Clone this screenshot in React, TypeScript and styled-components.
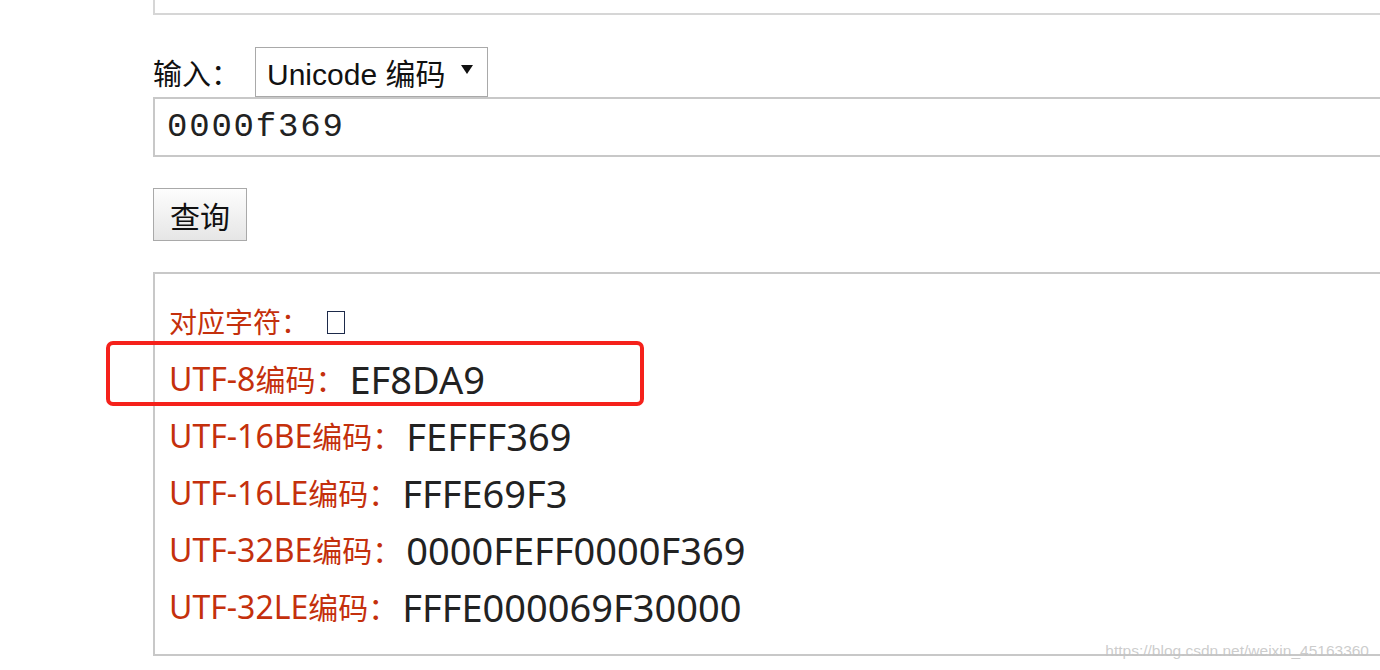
import React from "react";
import styled, { createGlobalStyle } from "styled-components";

const Global = createGlobalStyle`
  html, body { margin: 0; padding: 0; background: #fff; overflow: hidden; }
  body { width: 1380px; height: 670px; position: relative; font-family: "Noto Sans CJK SC", sans-serif; }
`;

const Page = styled.div`
  position: relative;
  width: 1380px;
  height: 670px;
  overflow: hidden;
`;

const Column = styled.div`
  margin-left: 153px;
  width: 1300px;
  display: flex;
  flex-direction: column;
`;

const TopBox = styled.div`
  height: 13px;
  border: 2px solid #d6d6d6;
  border-top: none;
`;

const InputRow = styled.div`
  margin-top: 31px;
  display: flex;
  align-items: flex-end;
  height: 51px;
`;

const Label = styled.span`
  font-family: "Liberation Sans", "Noto Sans CJK SC", sans-serif;
  font-size: 29px;
  color: #111;
  line-height: 1;
  padding-bottom: 7px;
  width: 102px;
`;

const Select = styled.div`
  box-sizing: border-box;
  width: 233px;
  height: 50px;
  border: 1px solid #a9a9a9;
  display: flex;
  align-items: center;
  padding-left: 11px;
  gap: 16px;
  font-family: "Liberation Sans", "Noto Sans CJK SC", sans-serif;
  font-size: 30px;
  color: #111;
`;

const Arrow = styled.span`
  width: 0;
  height: 0;
  border-left: 6px solid transparent;
  border-right: 6px solid transparent;
  border-top: 9px solid #111;
  margin-top: -6px;
`;

const TextInput = styled.div`
  box-sizing: border-box;
  height: 60px;
  border: 2px solid #c8c8c8;
  display: flex;
  align-items: center;
  padding-left: 12px;
  font-family: "Liberation Mono", monospace;
  font-size: 34px;
  letter-spacing: 1.8px;
  color: #222;
`;

const Button = styled.div`
  margin-top: 31px;
  box-sizing: border-box;
  width: 94px;
  height: 53px;
  border: 1px solid #a9a9a9;
  background: linear-gradient(#fdfdfd, #e6e6e6);
  display: flex;
  align-items: center;
  justify-content: center;
  font-family: "Noto Sans CJK SC", sans-serif;
  font-size: 30px;
  color: #111;
`;

const ResultBox = styled.div`
  margin-top: 31px;
  box-sizing: border-box;
  height: 384px;
  border: 2px solid #c8c8c8;
  padding: 19px 0 0 14px;
  display: flex;
  flex-direction: column;
`;

const Row = styled.div`
  height: 57px;
  display: flex;
  align-items: center;
  white-space: nowrap;
`;

const Key = styled.span<{ $size?: number }>`
  font-family: "Noto Sans", "Noto Sans CJK SC", sans-serif;
  font-size: ${(p) => p.$size ?? 30}px;
  color: #c4300c;
  line-height: 1;
`;

const Latin = styled.span`
  font-size: 32px;
`;

const Value = styled.span`
  font-family: "Noto Sans", sans-serif;
  font-size: 38px;
  color: #222;
  line-height: 1;
  margin-left: 4px;
`;

const Tofu = styled.span`
  display: inline-block;
  box-sizing: border-box;
  width: 18px;
  height: 23px;
  border: 1.5px solid #1d2a4a;
  margin-left: 18px;
  margin-top: 2px;
`;

const Highlight = styled.div`
  position: absolute;
  left: 106px;
  top: 341px;
  width: 538px;
  height: 65px;
  box-sizing: border-box;
  border: 4px solid #f5211b;
  border-radius: 7px;
`;

const Watermark = styled.div`
  position: absolute;
  right: 11px;
  top: 642px;
  font-family: "Liberation Sans", sans-serif;
  font-size: 15.5px;
  color: rgba(195, 195, 195, 0.85);
`;

const rows = [
  { k: "UTF-8", v: "EF8DA9" },
  { k: "UTF-16BE", v: "FEFFF369" },
  { k: "UTF-16LE", v: "FFFE69F3" },
  { k: "UTF-32BE", v: "0000FEFF0000F369" },
  { k: "UTF-32LE", v: "FFFE000069F30000" },
];

export default function App() {
  return (
    <Page>
      <Global />
      <Column>
        <TopBox />
        <InputRow>
          <Label>输入：</Label>
          <Select>
            <span>Unicode 编码</span>
            <Arrow />
          </Select>
        </InputRow>
        <TextInput>0000f369</TextInput>
        <Button>查询</Button>
        <ResultBox>
          <Row>
            <Key $size={28}>对应字符：</Key>
            <Tofu />
          </Row>
          {rows.map((r) => (
            <Row key={r.k}>
              <Key>
                <Latin>{r.k}</Latin>编码：
              </Key>
              <Value>{r.v}</Value>
            </Row>
          ))}
        </ResultBox>
      </Column>
      <Highlight />
      <Watermark>https://blog.csdn.net/weixin_45163360</Watermark>
    </Page>
  );
}
